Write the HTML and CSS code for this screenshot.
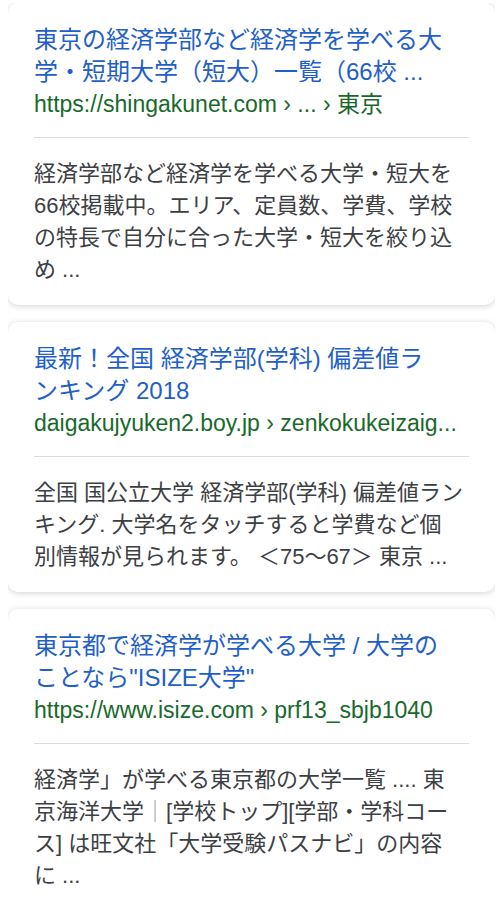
FILE: index.html
```html
<!DOCTYPE html>
<html lang="ja">
<head>
<meta charset="utf-8">
<title>経済学部 検索結果</title>
<link rel="stylesheet" href="styles.css">
</head>
<body>
<main class="results">
  <article class="card">
    <a class="title" href="#">東京の経済学部など経済学を学べる大学・短期大学（短大）一覧（66校 ...</a>
    <div class="url">https://shingakunet.com › ... › 東京</div>
    <hr class="sep">
    <p class="snippet">経済学部など経済学を学べる大学・短大を66校掲載中。エリア、定員数、学費、学校の特長で自分に合った大学・短大を絞り込め ...</p>
  </article>
  <article class="card">
    <a class="title" href="#">最新！全国 経済学部(学科) 偏差値ラ<br>ンキング 2018</a>
    <div class="url">daigakujyuken2.boy.jp › zenkokukeizaig...</div>
    <hr class="sep">
    <p class="snippet">全国 国公立大学 経済学部(学科) 偏差値ラン<br>キング. 大学名をタッチすると学費など個<br>別情報が見られます。 ＜75〜67＞ 東京 ...</p>
  </article>
  <article class="card">
    <a class="title" href="#">東京都で経済学が学べる大学 / 大学の<br>ことなら"ISIZE大学"</a>
    <div class="url">https://www.isize.com › prf13_sbjb1040</div>
    <hr class="sep">
    <p class="snippet">経済学」が学べる東京都の大学一覧 .... 東<br>京海洋大学<span class="bar">｜</span>[学校トップ][学部・学科コー<br>ス] は旺文社「大学受験パスナビ」の内容<br>に ...</p>
  </article>
</main>
</body>
</html>
```
FILE: styles.css
```css
html, body {
  background: #ffffff;
}
body {
  margin: 3px 9px 0 8px;
  font-family: "Liberation Sans", "Noto Sans CJK JP", sans-serif;
}
.results {
  display: flex;
  flex-direction: column;
  gap: 17px;
}
.card {
  background: #fff;
  border-radius: 10px;
  box-shadow: 0 1px 6px rgba(0, 0, 0, 0.18);
  padding: 21px 26px 19px;
}
.title {
  display: block;
  font-size: 24px;
  line-height: 32px;
  color: #1f5fc7;
  text-decoration: none;
  margin-bottom: 2px;
}
.url {
  font-size: 23px;
  line-height: 28px;
  color: #18692a;
  white-space: nowrap;
}
.sep {
  border: 0;
  border-top: 1px solid #dadce0;
  margin: 19px 0 20px;
  height: 0;
}
.snippet {
  margin: 0;
  font-size: 22px;
  line-height: 32px;
  color: #3c4043;
}
.bar {
  color: #9aa0a6;
}
```
